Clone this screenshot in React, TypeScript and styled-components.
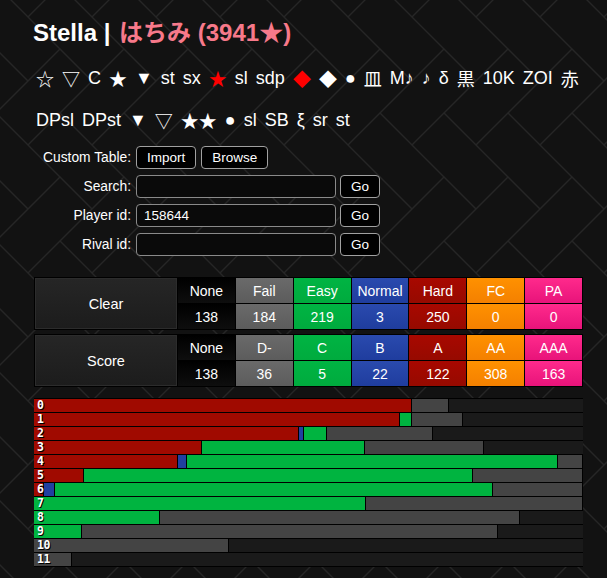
import styled, { createGlobalStyle } from 'styled-components';

// herringbone background tile, bricks at 45deg
const herringbone = (() => {
	const pt = (a: number, b: number) => [32 * (a + b), 32 * (a - b)];
	const bricks = [
		[[0, 0], [2, 0], [2, 1], [0, 1]],
		[[2, -1], [3, -1], [3, 1], [2, 1]],
	];
	let d = '';
	for (let tx = -3; tx <= 2; tx++) {
		for (let ty = -2; ty <= 2; ty++) {
			for (const br of bricks) {
				const pts = br.map(([a, b]) => {
					const [x, y] = pt(a, b);
					return `${x + tx * 64} ${y + ty * 128}`;
				});
				d += 'M' + pts.join('L') + 'Z';
			}
		}
	}
	const svg = `<svg xmlns='http://www.w3.org/2000/svg' width='64' height='128'><path d='${d}' fill='none' stroke='#262626' stroke-width='1.3'/></svg>`;
	return `data:image/svg+xml,${encodeURIComponent(svg)}`;
})();

const GlobalStyle = createGlobalStyle`
	html, body {
		margin: 0;
		padding: 0;
	}
	body {
		background-color: #121212;
		background-image: url("${herringbone}");
		background-position: 28px 17px;
		color: #fff;
		font-family: 'Liberation Sans', Arial, 'Noto Sans CJK JP', sans-serif;
	}
`;

const Page = styled.div`
	width: 549px;
	margin-left: 34px;
	padding-bottom: 10px;
`;

const Title = styled.h1`
	margin: 0;
	padding-top: 20px;
	margin-left: -1px;
	font-size: 24px;
	line-height: 26px;
	font-weight: bold;
`;

const Pink = styled.span`
	color: #f7798a;
	margin-left: 2px;
`;

const SymbolRow = styled.div<{ $first?: boolean }>`
	display: flex;
	align-items: center;
	gap: 8px;
	height: 42px;
	margin-top: ${(p) => (p.$first ? '11px' : '0')};
	padding-left: 2px;
	font-size: 18px;
	white-space: nowrap;
`;

const Sym = styled.span<{ $red?: boolean }>`
	color: ${(p) => (p.$red ? '#ff0000' : '#fff')};
`;

const Form = styled.div`
	display: grid;
	grid-template-columns: 97px auto;
	grid-auto-rows: 23px;
	row-gap: 6px;
	column-gap: 5px;
	margin-top: 5px;
	font-size: 13.5px;
`;

const Label = styled.label`
	text-align: right;
	align-self: center;
	white-space: nowrap;
	font-size: 13.8px;
`;

const Controls = styled.div`
	display: flex;
	gap: 5px;
`;

const Button = styled.button`
	height: 23px;
	padding: 0 10px;
	background: #000;
	color: #fff;
	border: 1px solid #a0a0a0;
	border-radius: 4px;
	font-family: inherit;
	font-size: 13.5px;
`;

const Input = styled.input`
	width: 200px;
	height: 23px;
	box-sizing: border-box;
	padding: 0 7px;
	background: #0a0a0a;
	color: #fff;
	border: 1px solid #8a8a8a;
	border-radius: 4px;
	font-family: inherit;
	font-size: 13.5px;
	margin-right: -1px;
`;

const Tables = styled.div`
	margin-top: 21px;
`;

const StatGrid = styled.div<{ $gap?: number }>`
	display: grid;
	grid-template-columns: 142px repeat(7, 1fr);
	grid-template-rows: 25px 25px;
	gap: 1px;
	padding: 1px;
	background: #000;
	margin-top: ${(p) => p.$gap ?? 0}px;
	font-size: 14px;
`;

const Head = styled.div`
	grid-row: span 2;
	display: flex;
	align-items: center;
	justify-content: center;
	background: linear-gradient(#262626, #1c1c1c);
	box-shadow: inset 0 0 0 1px #2c2c2c;
	font-size: 14.5px;
`;

const tone: Record<string, [string, string]> = {
	none: ['#000', '#0e0e0e'],
	fail: ['#6a6a6a', '#5c5c5c'],
	easy: ['#00b443', '#00ab3e'],
	normal: ['#2a4aae', '#1f3d9e'],
	hard: ['#a80800', '#960a00'],
	fc: ['#ff9100', '#f48000'],
	pa: ['#ff2a8c', '#e8137a'],
};

const Cell = styled.div<{ $tone: string }>`
	display: flex;
	align-items: center;
	justify-content: center;
	background: linear-gradient(${(p) => tone[p.$tone][0]}, ${(p) => tone[p.$tone][1]});
`;

const Bars = styled.div`
	margin-top: 11px;
	border-top: 1px solid #000;
`;

const BarRow = styled.div`
	position: relative;
	display: flex;
	height: 13px;
	border-bottom: 1px solid #000;
	background: #1a1a1a;
`;

const barColor: Record<string, string> = {
	r: '#a00a00',
	b: '#2040a0',
	g: '#00b440',
	s: '#444',
};

const Seg = styled.div<{ $c: string }>`
	box-sizing: border-box;
	flex: none;
	height: 100%;
	background: ${(p) => barColor[p.$c]};
	border-right: 1px solid #000;
`;

const Level = styled.span`
	position: absolute;
	left: 3px;
	top: 0;
	font-family: 'DejaVu Sans Mono', monospace;
	font-weight: bold;
	font-size: 11.5px;
	line-height: 13px;
	letter-spacing: -0.5px;
	color: #fff;
	text-shadow: 1px 1px 0 #000;
`;

const row1: [string, boolean?][] = [
	['☆'], ['▽'], ['C'], ['★'], ['▼'], ['st'], ['sx'], ['★', true], ['sl'], ['sdp'],
	['◆', true], ['◆'], ['●'], ['皿'], ['M♪'], ['♪'], ['δ'], ['黒'], ['10K'], ['ZOI'], ['赤'],
];
const row2 = ['DPsl', 'DPst', '▼', '▽', '★★', '●', 'sl', 'SB', 'ξ', 'sr', 'st'];

const clear = [
	['None', 'none', 138], ['Fail', 'fail', 184], ['Easy', 'easy', 219], ['Normal', 'normal', 3],
	['Hard', 'hard', 250], ['FC', 'fc', 0], ['PA', 'pa', 0],
] as const;
const score = [
	['None', 'none', 138], ['D-', 'fail', 36], ['C', 'easy', 5], ['B', 'normal', 22],
	['A', 'hard', 122], ['AA', 'fc', 308], ['AAA', 'pa', 163],
] as const;

// segment widths in px (incl. separator); remainder is unplayed
const levels: [string, number][][] = [
	[['r', 378], ['s', 37]],
	[['r', 366], ['g', 12], ['s', 51]],
	[['r', 265], ['b', 5], ['g', 23], ['s', 106]],
	[['r', 168], ['g', 163], ['s', 119]],
	[['r', 144], ['b', 9], ['g', 371], ['s', 25]],
	[['r', 50], ['g', 389], ['s', 110]],
	[['r', 10], ['b', 11], ['g', 438], ['s', 90]],
	[['g', 332], ['s', 217]],
	[['g', 126], ['s', 360]],
	[['g', 48], ['s', 416]],
	[['s', 195]],
	[['s', 38]],
];

function StatTable({ name, rows, gap }: { name: string; rows: typeof clear | typeof score; gap?: number }) {
	return (
		<StatGrid $gap={gap}>
			<Head>{name}</Head>
			{rows.map(([label, t]) => (
				<Cell key={label} $tone={t}>{label}</Cell>
			))}
			{rows.map(([label, t, n]) => (
				<Cell key={label + 'n'} $tone={t}>{n}</Cell>
			))}
		</StatGrid>
	);
}

export default function App() {
	return (
		<>
			<GlobalStyle />
			<Page>
				<Title>
					Stella | <Pink>はちみ (3941★)</Pink>
				</Title>
				<SymbolRow $first>
					{row1.map(([s, red], i) => (
						<Sym key={i} $red={red}>{s}</Sym>
					))}
				</SymbolRow>
				<SymbolRow>
					{row2.map((s, i) => (
						<Sym key={i}>{s}</Sym>
					))}
				</SymbolRow>
				<Form>
					<Label>Custom Table:</Label>
					<Controls>
						<Button>Import</Button>
						<Button>Browse</Button>
					</Controls>
					<Label>Search:</Label>
					<Controls>
						<Input />
						<Button>Go</Button>
					</Controls>
					<Label>Player id:</Label>
					<Controls>
						<Input defaultValue="158644" />
						<Button>Go</Button>
					</Controls>
					<Label>Rival id:</Label>
					<Controls>
						<Input />
						<Button>Go</Button>
					</Controls>
				</Form>
				<Tables>
					<StatTable name="Clear" rows={clear} />
					<StatTable name="Score" rows={score} gap={4} />
				</Tables>
				<Bars>
					{levels.map((segs, i) => (
						<BarRow key={i}>
							{segs.map(([c, w], j) => (
								<Seg key={j} $c={c} style={{ width: w }} />
							))}
							<Level>{i}</Level>
						</BarRow>
					))}
				</Bars>
			</Page>
		</>
	);
}
